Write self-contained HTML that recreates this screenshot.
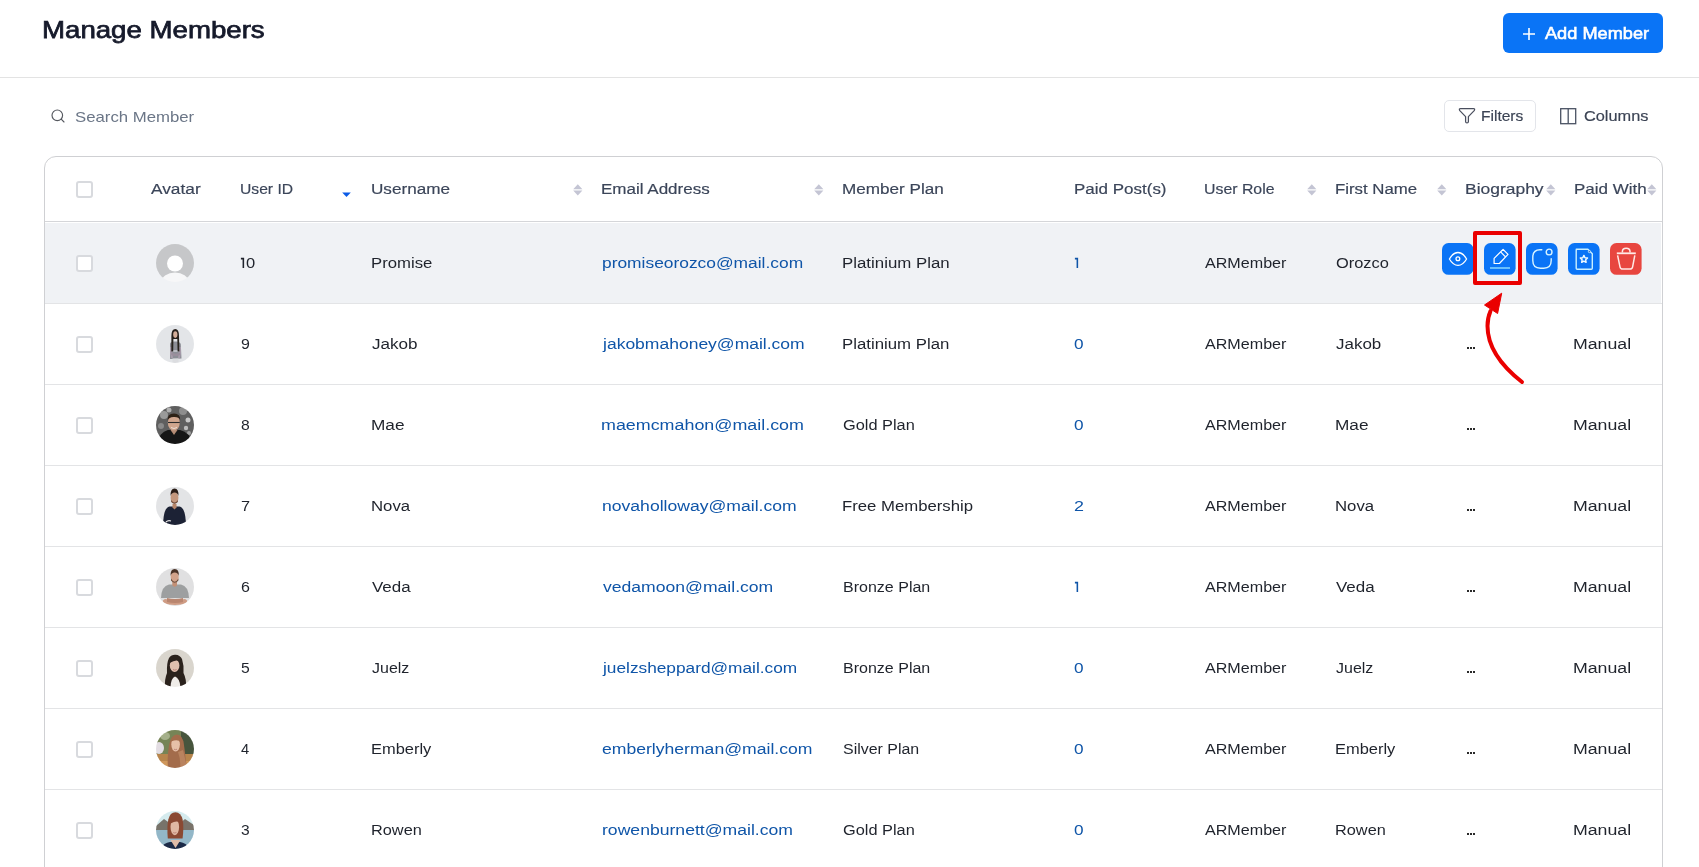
<!DOCTYPE html>
<html><head><meta charset="utf-8">
<style>
html,body{margin:0;padding:0;}
body{width:1699px;height:867px;overflow:hidden;position:relative;background:#fff;font-family:"Liberation Sans",sans-serif;}
.t{position:absolute;white-space:nowrap;line-height:1;transform-origin:0 0;}
.m{-webkit-text-stroke:0.18px currentColor;}
.av{position:absolute;width:38px;height:38px;border-radius:50%;background:#c4c4c4;overflow:hidden;}
</style></head><body>
<div class="t " style="left:41.66px;top:18.18px;font-size:24px;transform:scaleX(1.1511);color:#161a2b;-webkit-text-stroke:0.75px #161a2b;">Manage Members</div>
<div style="position:absolute;left:0;top:77px;width:1699px;height:1px;background:#e3e3e3"></div>
<div style="position:absolute;left:1503px;top:13px;width:160px;height:40px;border-radius:6px;background:#0a74f6"></div>
<svg style="position:absolute;left:1521px;top:27px" width="16" height="14" viewBox="0 0 16 14"><path d="M8 1V13M2 7H14" stroke="#fff" stroke-width="1.6" fill="none"/></svg>
<div class="t " style="left:1544.95px;top:25.01px;font-size:17px;transform:scaleX(1.0691);color:#ffffff;-webkit-text-stroke:0.6px #fff;">Add Member</div>
<svg style="position:absolute;left:50px;top:108px" width="16" height="16" viewBox="0 0 16 16"><circle cx="7.3" cy="7.3" r="5.3" stroke="#55585f" stroke-width="1.15" fill="none"/><path d="M11.2 11.2L14 14" stroke="#55585f" stroke-width="1.15" stroke-linecap="round"/></svg>
<div class="t " style="left:74.92px;top:109.30px;font-size:15px;transform:scaleX(1.1168);color:#6b7687;">Search Member</div>
<div style="position:absolute;left:1444px;top:100px;width:90px;height:30px;border:1px solid #e3e5ea;border-radius:5px;background:#fff"></div>
<svg style="position:absolute;left:1457px;top:106px" width="19" height="19" viewBox="0 0 19 19"><path d="M3.6 2.6H16.4Q18.4 2.6 17.2 4.6L11.4 10.6V15.4Q11.4 16.9 10 16.9Q8.6 16.9 8.6 15.4V10.6L2.8 4.6Q1.6 2.6 3.6 2.6Z" stroke="#4a4f5e" stroke-width="1.25" fill="none" stroke-linejoin="round"/></svg>
<div class="t m" style="left:1481.25px;top:108.48px;font-size:15.5px;transform:scaleX(1.0025);color:#3b4354;">Filters</div>
<svg style="position:absolute;left:1559px;top:107px" width="19" height="19" viewBox="0 0 19 19"><rect x="1.7" y="1.7" width="15" height="15" stroke="#4a5263" stroke-width="1.3" fill="none"/><path d="M9.2 1.7V16.7" stroke="#4a5263" stroke-width="1.3"/></svg>
<div class="t m" style="left:1583.86px;top:108.48px;font-size:15.5px;transform:scaleX(1.0535);color:#3b4354;">Columns</div>
<div style="position:absolute;left:44px;top:156px;width:1617px;height:760px;border:1px solid #cfd0d3;border-radius:12px;background:#fff"></div>
<div class="t m" style="left:150.64px;top:181.08px;font-size:15.5px;transform:scaleX(1.1154);color:#3b4559;">Avatar</div>
<div class="t m" style="left:239.99px;top:181.08px;font-size:15.5px;transform:scaleX(1.0099);color:#3b4559;">User ID</div>
<div class="t m" style="left:370.58px;top:181.08px;font-size:15.5px;transform:scaleX(1.1041);color:#3b4559;">Username</div>
<div class="t m" style="left:601.33px;top:181.08px;font-size:15.5px;transform:scaleX(1.0972);color:#3b4559;">Email Address</div>
<div class="t m" style="left:842.22px;top:181.08px;font-size:15.5px;transform:scaleX(1.1034);color:#3b4559;">Member Plan</div>
<div class="t m" style="left:1073.73px;top:181.08px;font-size:15.5px;transform:scaleX(1.0961);color:#3b4559;">Paid Post(s)</div>
<div class="t m" style="left:1204.17px;top:181.08px;font-size:15.5px;transform:scaleX(1.0231);color:#3b4559;">User Role</div>
<div class="t m" style="left:1334.85px;top:181.08px;font-size:15.5px;transform:scaleX(1.0833);color:#3b4559;">First Name</div>
<div class="t m" style="left:1465.39px;top:181.08px;font-size:15.5px;transform:scaleX(1.1255);color:#3b4559;">Biography</div>
<div class="t m" style="left:1573.93px;top:181.08px;font-size:15.5px;transform:scaleX(1.0976);color:#3b4559;">Paid With</div>
<div style="position:absolute;left:76px;top:181px;width:13px;height:13px;border:2px solid #d8dade;border-radius:3px;background:#fff"></div>
<svg style="position:absolute;left:572.6px;top:183.8px" width="10" height="12" viewBox="0 0 10 12"><path d="M0.2 5.2L4.8 0.3L9.4 5.2Z M0.2 6.5L4.8 11.5L9.4 6.5Z" fill="#c4c5d4"/></svg>
<svg style="position:absolute;left:813.6px;top:183.8px" width="10" height="12" viewBox="0 0 10 12"><path d="M0.2 5.2L4.8 0.3L9.4 5.2Z M0.2 6.5L4.8 11.5L9.4 6.5Z" fill="#c4c5d4"/></svg>
<svg style="position:absolute;left:1306.6px;top:183.8px" width="10" height="12" viewBox="0 0 10 12"><path d="M0.2 5.2L4.8 0.3L9.4 5.2Z M0.2 6.5L4.8 11.5L9.4 6.5Z" fill="#c4c5d4"/></svg>
<svg style="position:absolute;left:1436.6px;top:183.8px" width="10" height="12" viewBox="0 0 10 12"><path d="M0.2 5.2L4.8 0.3L9.4 5.2Z M0.2 6.5L4.8 11.5L9.4 6.5Z" fill="#c4c5d4"/></svg>
<svg style="position:absolute;left:1545.6px;top:183.8px" width="10" height="12" viewBox="0 0 10 12"><path d="M0.2 5.2L4.8 0.3L9.4 5.2Z M0.2 6.5L4.8 11.5L9.4 6.5Z" fill="#c4c5d4"/></svg>
<svg style="position:absolute;left:1646.6px;top:183.8px" width="10" height="12" viewBox="0 0 10 12"><path d="M0.2 5.2L4.8 0.3L9.4 5.2Z M0.2 6.5L4.8 11.5L9.4 6.5Z" fill="#c4c5d4"/></svg>
<svg style="position:absolute;left:342px;top:191.8px" width="9" height="6" viewBox="0 0 9 6"><path d="M0.2 0.4H8.8L4.5 5Z" fill="#0b5be6"/></svg>
<div style="position:absolute;left:45px;top:221px;width:1617px;height:1px;background:#d5d6d9"></div>
<div style="position:absolute;left:45px;top:223px;width:1616px;height:80px;background:#f0f2f5"></div>
<div style="position:absolute;left:45px;top:303px;width:1617px;height:1px;background:#e3e4e6"></div>
<div style="position:absolute;left:76px;top:255px;width:13px;height:13px;border:2px solid #d8dade;border-radius:3px;background:#fff"></div>
<svg style="position:absolute;left:156px;top:244px" width="38" height="38" viewBox="0 0 38 38"><defs><clipPath id="c0"><circle cx="19" cy="19" r="19"/></clipPath><filter id="bl0" x="-10%" y="-10%" width="120%" height="120%"><feGaussianBlur stdDeviation="0.35"/></filter></defs><g clip-path="url(#c0)"><g filter="url(#bl0)"><rect width="38" height="38" fill="#c6c7c9"/><circle cx="19" cy="19.5" r="8" fill="#fff"/><ellipse cx="19" cy="38" rx="13.5" ry="9.5" fill="#f7f7f8"/></g></g></svg>
<svg style="position:absolute;left:240px;top:257px" width="6" height="12" viewBox="0 0 6 12"><path d="M0.9 1.6H3.35V11" stroke="#1f232c" stroke-width="1.55" fill="none"/></svg>
<div class="t " style="left:245.66px;top:254.88px;font-size:15.5px;transform:scaleX(1.0676);color:#1f232c;">0</div>
<div class="t " style="left:370.55px;top:254.88px;font-size:15.5px;transform:scaleX(1.0792);color:#1f232c;">Promise</div>
<div class="t " style="left:601.58px;top:254.88px;font-size:15.5px;transform:scaleX(1.1212);color:#0f55a8;">promiseorozco@mail.com</div>
<div class="t " style="left:842.44px;top:254.88px;font-size:15.5px;transform:scaleX(1.0868);color:#1f232c;">Platinium Plan</div>
<svg style="position:absolute;left:1074px;top:257px" width="6" height="12" viewBox="0 0 6 12"><path d="M0.9 1.6H3.35V11" stroke="#0f55a8" stroke-width="1.55" fill="none"/></svg>
<div class="t " style="left:1205.35px;top:254.88px;font-size:15.5px;transform:scaleX(1.0391);color:#1f232c;">ARMember</div>
<div class="t " style="left:1335.51px;top:254.88px;font-size:15.5px;transform:scaleX(1.0587);color:#1f232c;">Orozco</div>
<div style="position:absolute;left:45px;top:384px;width:1617px;height:1px;background:#e3e4e6"></div>
<div style="position:absolute;left:76px;top:336px;width:13px;height:13px;border:2px solid #d8dade;border-radius:3px;background:#fff"></div>
<svg style="position:absolute;left:156px;top:325px" width="38" height="38" viewBox="0 0 38 38"><defs><clipPath id="c1"><circle cx="19" cy="19" r="19"/></clipPath><filter id="bl1" x="-10%" y="-10%" width="120%" height="120%"><feGaussianBlur stdDeviation="0.35"/></filter></defs><g clip-path="url(#c1)"><g filter="url(#bl1)"><rect width="38" height="38" fill="#e3e5e8"/><path d="M14 34V19Q14 17.5 15.5 17.2L17.5 16.5H21L23 17.2Q24.6 17.5 24.8 19.2L25.5 33.5Z" fill="#8c8e96"/><path d="M14 22Q13.6 28 15 33H17Q16 28 16.5 22Z" fill="#a89cab"/><path d="M25 22Q25.4 28 24 33H22Q23 28 22.5 22Z" fill="#a89cab"/><path d="M16 25H23V27H16Z" fill="#b9bbc2"/><path d="M15.2 27Q19 30 24 27.5V30Q19 32 15.2 30Z" fill="#9a8e9c"/><path d="M15.4 11Q15.4 4 19.3 4Q23 4 23 11L23.4 26.5H21.6L21.3 14H17.4L17.2 26.5H15.3Z" fill="#27201d"/><ellipse cx="19.3" cy="9.6" rx="2.1" ry="3.3" fill="#d4ae9a"/><rect x="16.5" y="33.5" width="6" height="4.5" fill="#dcdde0"/></g></g></svg>
<div class="t " style="left:241.08px;top:335.88px;font-size:15.5px;transform:scaleX(1.0278);color:#1f232c;">9</div>
<div class="t " style="left:371.62px;top:335.88px;font-size:15.5px;transform:scaleX(1.1026);color:#1f232c;">Jakob</div>
<div class="t " style="left:603.15px;top:335.88px;font-size:15.5px;transform:scaleX(1.1295);color:#0f55a8;">jakobmahoney@mail.com</div>
<div class="t " style="left:842.45px;top:335.88px;font-size:15.5px;transform:scaleX(1.0837);color:#1f232c;">Platinium Plan</div>
<div class="t " style="left:1074.44px;top:335.88px;font-size:15.5px;transform:scaleX(1.1081);color:#0f55a8;">0</div>
<div class="t " style="left:1205.35px;top:335.88px;font-size:15.5px;transform:scaleX(1.0391);color:#1f232c;">ARMember</div>
<div class="t " style="left:1336.03px;top:335.88px;font-size:15.5px;transform:scaleX(1.0952);color:#1f232c;">Jakob</div>
<div style="position:absolute;left:1467px;top:347px;width:2px;height:2px;background:#2a2a2a"></div>
<div style="position:absolute;left:1470px;top:347px;width:2px;height:2px;background:#2a2a2a"></div>
<div style="position:absolute;left:1473px;top:347px;width:2px;height:2px;background:#2a2a2a"></div>
<div class="t " style="left:1573.37px;top:335.88px;font-size:15.5px;transform:scaleX(1.1432);color:#1f232c;">Manual</div>
<div style="position:absolute;left:45px;top:465px;width:1617px;height:1px;background:#e3e4e6"></div>
<div style="position:absolute;left:76px;top:417px;width:13px;height:13px;border:2px solid #d8dade;border-radius:3px;background:#fff"></div>
<svg style="position:absolute;left:156px;top:406px" width="38" height="38" viewBox="0 0 38 38"><defs><clipPath id="c2"><circle cx="19" cy="19" r="19"/></clipPath><filter id="bl2" x="-10%" y="-10%" width="120%" height="120%"><feGaussianBlur stdDeviation="0.35"/></filter></defs><g clip-path="url(#c2)"><g filter="url(#bl2)"><rect width="38" height="38" fill="#5e5e5e"/><circle cx="8" cy="9" r="4" fill="#9a9a9a"/><circle cx="27" cy="5" r="4" fill="#8d8d8d"/><circle cx="32" cy="14" r="2.5" fill="#c8c8c8"/><circle cx="30" cy="22" r="2.2" fill="#bdbdbd"/><circle cx="5" cy="20" r="3" fill="#8a8a8a"/><circle cx="13" cy="4" r="2.5" fill="#b0b0b0"/><circle cx="33" cy="27" r="2" fill="#a0a0a0"/><path d="M2 38Q3 26 12 24H24Q34 26 36 38Z" fill="#141414"/><path d="M14.5 24L18 29L21.5 24Z" fill="#b48b74"/><ellipse cx="17.8" cy="16.5" rx="6" ry="8" fill="#d0a68e"/><path d="M11.6 14.5Q11 7.5 18 7.5Q24.5 7.8 24.2 14Q23 10.8 18 11Q13 10.8 11.6 14.5Z" fill="#2e2019"/><path d="M12 16.5H23.8" stroke="#2b2b2b" stroke-width="1.1"/><path d="M15 21.5Q18 23.5 21 21.5" stroke="#f0e6e0" stroke-width="0.9" fill="none"/></g></g></svg>
<div class="t " style="left:241.14px;top:416.88px;font-size:15.5px;transform:scaleX(1.0137);color:#1f232c;">8</div>
<div class="t " style="left:370.51px;top:416.88px;font-size:15.5px;transform:scaleX(1.1115);color:#1f232c;">Mae</div>
<div class="t " style="left:601.49px;top:416.88px;font-size:15.5px;transform:scaleX(1.1535);color:#0f55a8;">maemcmahon@mail.com</div>
<div class="t " style="left:843.01px;top:416.88px;font-size:15.5px;transform:scaleX(1.0543);color:#1f232c;">Gold Plan</div>
<div class="t " style="left:1074.44px;top:416.88px;font-size:15.5px;transform:scaleX(1.1081);color:#0f55a8;">0</div>
<div class="t " style="left:1205.35px;top:416.88px;font-size:15.5px;transform:scaleX(1.0391);color:#1f232c;">ARMember</div>
<div class="t " style="left:1334.91px;top:416.88px;font-size:15.5px;transform:scaleX(1.1115);color:#1f232c;">Mae</div>
<div style="position:absolute;left:1467px;top:428px;width:2px;height:2px;background:#2a2a2a"></div>
<div style="position:absolute;left:1470px;top:428px;width:2px;height:2px;background:#2a2a2a"></div>
<div style="position:absolute;left:1473px;top:428px;width:2px;height:2px;background:#2a2a2a"></div>
<div class="t " style="left:1573.37px;top:416.88px;font-size:15.5px;transform:scaleX(1.1432);color:#1f232c;">Manual</div>
<div style="position:absolute;left:45px;top:546px;width:1617px;height:1px;background:#e3e4e6"></div>
<div style="position:absolute;left:76px;top:498px;width:13px;height:13px;border:2px solid #d8dade;border-radius:3px;background:#fff"></div>
<svg style="position:absolute;left:156px;top:487px" width="38" height="38" viewBox="0 0 38 38"><defs><clipPath id="c3"><circle cx="19" cy="19" r="19"/></clipPath><filter id="bl3" x="-10%" y="-10%" width="120%" height="120%"><feGaussianBlur stdDeviation="0.35"/></filter></defs><g clip-path="url(#c3)"><g filter="url(#bl3)"><rect width="38" height="38" fill="#e3e4e6"/><path d="M7 38Q7.5 20.5 13.5 19.5H23.5Q29.5 20.5 30 38Z" fill="#1e2234"/><path d="M16.5 17V20.5L18.5 22.5L20.5 20.5V17Z" fill="#b58469"/><ellipse cx="18.5" cy="10.8" rx="3.9" ry="6" fill="#c4977d"/><path d="M14.6 9Q14.2 1.8 18.6 1.6Q22.9 1.8 22.4 9Q21.6 5.5 18.6 5.5Q15.5 5.5 14.6 9Z" fill="#2a1e18"/><path d="M15.2 13Q18.5 18 21.8 13V15Q18.5 18.5 15.2 15Z" fill="#6e4a38"/><path d="M10 35Q12 33 15 34" stroke="#e8e8e8" stroke-width="1.2" fill="none"/></g></g></svg>
<div class="t " style="left:240.96px;top:497.88px;font-size:15.5px;transform:scaleX(1.0496);color:#1f232c;">7</div>
<div class="t " style="left:370.55px;top:497.88px;font-size:15.5px;transform:scaleX(1.0815);color:#1f232c;">Nova</div>
<div class="t " style="left:601.51px;top:497.88px;font-size:15.5px;transform:scaleX(1.1338);color:#0f55a8;">novaholloway@mail.com</div>
<div class="t " style="left:842.45px;top:497.88px;font-size:15.5px;transform:scaleX(1.0790);color:#1f232c;">Free Membership</div>
<div class="t " style="left:1074.23px;top:497.88px;font-size:15.5px;transform:scaleX(1.1549);color:#0f55a8;">2</div>
<div class="t " style="left:1205.35px;top:497.88px;font-size:15.5px;transform:scaleX(1.0391);color:#1f232c;">ARMember</div>
<div class="t " style="left:1334.95px;top:497.88px;font-size:15.5px;transform:scaleX(1.0815);color:#1f232c;">Nova</div>
<div style="position:absolute;left:1467px;top:509px;width:2px;height:2px;background:#2a2a2a"></div>
<div style="position:absolute;left:1470px;top:509px;width:2px;height:2px;background:#2a2a2a"></div>
<div style="position:absolute;left:1473px;top:509px;width:2px;height:2px;background:#2a2a2a"></div>
<div class="t " style="left:1573.37px;top:497.88px;font-size:15.5px;transform:scaleX(1.1432);color:#1f232c;">Manual</div>
<div style="position:absolute;left:45px;top:627px;width:1617px;height:1px;background:#e3e4e6"></div>
<div style="position:absolute;left:76px;top:579px;width:13px;height:13px;border:2px solid #d8dade;border-radius:3px;background:#fff"></div>
<svg style="position:absolute;left:156px;top:568px" width="38" height="38" viewBox="0 0 38 38"><defs><clipPath id="c4"><circle cx="19" cy="19" r="19"/></clipPath><filter id="bl4" x="-10%" y="-10%" width="120%" height="120%"><feGaussianBlur stdDeviation="0.35"/></filter></defs><g clip-path="url(#c4)"><g filter="url(#bl4)"><rect width="38" height="38" fill="#e0e0e1"/><path d="M5 30Q5.5 18 13 16.5H25Q32.5 18 33 30Z" fill="#9d9fa0"/><path d="M9 31Q6 32 7 35Q19 39 31 35Q32 32 29 31Q19 33 9 31Z" fill="#cf9c84"/><path d="M11 30Q19 32 27 30V34Q19 36 11 34Z" fill="#b98670"/><path d="M16.3 14V17.5L18.7 19L21 17.5V14Z" fill="#c39076"/><ellipse cx="18.7" cy="9" rx="4" ry="5.6" fill="#d2a38b"/><path d="M14.6 8Q14.2 1 18.7 1Q23.2 1 22.8 8Q22 4.5 18.7 4.5Q15.4 4.5 14.6 8Z" fill="#4a3226"/><path d="M15 10.5Q18.7 17 22.4 10.5V12.5Q18.7 17 15 12.5Z" fill="#6e5040"/></g></g></svg>
<div class="t " style="left:240.97px;top:578.88px;font-size:15.5px;transform:scaleX(1.0350);color:#1f232c;">6</div>
<div class="t " style="left:371.85px;top:578.88px;font-size:15.5px;transform:scaleX(1.0935);color:#1f232c;">Veda</div>
<div class="t " style="left:602.64px;top:578.88px;font-size:15.5px;transform:scaleX(1.1338);color:#0f55a8;">vedamoon@mail.com</div>
<div class="t " style="left:842.51px;top:578.88px;font-size:15.5px;transform:scaleX(1.0335);color:#1f232c;">Bronze Plan</div>
<svg style="position:absolute;left:1074px;top:581px" width="6" height="12" viewBox="0 0 6 12"><path d="M0.9 1.6H3.35V11" stroke="#0f55a8" stroke-width="1.55" fill="none"/></svg>
<div class="t " style="left:1205.35px;top:578.88px;font-size:15.5px;transform:scaleX(1.0391);color:#1f232c;">ARMember</div>
<div class="t " style="left:1336.25px;top:578.88px;font-size:15.5px;transform:scaleX(1.0935);color:#1f232c;">Veda</div>
<div style="position:absolute;left:1467px;top:590px;width:2px;height:2px;background:#2a2a2a"></div>
<div style="position:absolute;left:1470px;top:590px;width:2px;height:2px;background:#2a2a2a"></div>
<div style="position:absolute;left:1473px;top:590px;width:2px;height:2px;background:#2a2a2a"></div>
<div class="t " style="left:1573.37px;top:578.88px;font-size:15.5px;transform:scaleX(1.1432);color:#1f232c;">Manual</div>
<div style="position:absolute;left:45px;top:708px;width:1617px;height:1px;background:#e3e4e6"></div>
<div style="position:absolute;left:76px;top:660px;width:13px;height:13px;border:2px solid #d8dade;border-radius:3px;background:#fff"></div>
<svg style="position:absolute;left:156px;top:649px" width="38" height="38" viewBox="0 0 38 38"><defs><clipPath id="c5"><circle cx="19" cy="19" r="19"/></clipPath><filter id="bl5" x="-10%" y="-10%" width="120%" height="120%"><feGaussianBlur stdDeviation="0.35"/></filter></defs><g clip-path="url(#c5)"><g filter="url(#bl5)"><rect width="38" height="38" fill="#d9d5cd"/><path d="M9 38Q8.5 30 11 24Q10.5 14 13 9Q15.5 5.5 19.5 5.8Q24 6 26 10Q28 16 27.5 24Q30.5 30 30 38Z" fill="#2c221e"/><path d="M14.5 38Q15 29 19 27.5Q23.5 29 24.5 38Z" fill="#efece8"/><ellipse cx="18.6" cy="16.5" rx="4.8" ry="6.4" fill="#e0c0ae"/><path d="M13.5 14Q14.5 8 19.5 8Q23.5 8.5 24 13Q21 9.5 13.5 14Z" fill="#2c221e"/><path d="M17 20.5Q18.8 21.8 20.6 20.5" stroke="#b97e76" stroke-width="0.9" fill="none"/></g></g></svg>
<div class="t " style="left:241.14px;top:659.88px;font-size:15.5px;transform:scaleX(1.0137);color:#1f232c;">5</div>
<div class="t " style="left:371.64px;top:659.88px;font-size:15.5px;transform:scaleX(1.0313);color:#1f232c;">Juelz</div>
<div class="t " style="left:603.15px;top:659.88px;font-size:15.5px;transform:scaleX(1.1143);color:#0f55a8;">juelzsheppard@mail.com</div>
<div class="t " style="left:842.51px;top:659.88px;font-size:15.5px;transform:scaleX(1.0335);color:#1f232c;">Bronze Plan</div>
<div class="t " style="left:1074.44px;top:659.88px;font-size:15.5px;transform:scaleX(1.1081);color:#0f55a8;">0</div>
<div class="t " style="left:1205.35px;top:659.88px;font-size:15.5px;transform:scaleX(1.0391);color:#1f232c;">ARMember</div>
<div class="t " style="left:1336.04px;top:659.88px;font-size:15.5px;transform:scaleX(1.0312);color:#1f232c;">Juelz</div>
<div style="position:absolute;left:1467px;top:671px;width:2px;height:2px;background:#2a2a2a"></div>
<div style="position:absolute;left:1470px;top:671px;width:2px;height:2px;background:#2a2a2a"></div>
<div style="position:absolute;left:1473px;top:671px;width:2px;height:2px;background:#2a2a2a"></div>
<div class="t " style="left:1573.37px;top:659.88px;font-size:15.5px;transform:scaleX(1.1432);color:#1f232c;">Manual</div>
<div style="position:absolute;left:45px;top:789px;width:1617px;height:1px;background:#e3e4e6"></div>
<div style="position:absolute;left:76px;top:741px;width:13px;height:13px;border:2px solid #d8dade;border-radius:3px;background:#fff"></div>
<svg style="position:absolute;left:156px;top:730px" width="38" height="38" viewBox="0 0 38 38"><defs><clipPath id="c6"><circle cx="19" cy="19" r="19"/></clipPath><filter id="bl6" x="-10%" y="-10%" width="120%" height="120%"><feGaussianBlur stdDeviation="0.35"/></filter></defs><g clip-path="url(#c6)"><g filter="url(#bl6)"><rect width="38" height="38" fill="#768456"/><rect x="25" width="13" height="32" fill="#46543c"/><ellipse cx="3" cy="18" rx="5" ry="6" fill="#e3dde3"/><ellipse cx="9" cy="6" rx="5" ry="4" fill="#a5b08a"/><rect y="24" width="38" height="14" fill="#b7854e"/><path d="M0 31H38V38H0Z" fill="#cf975c"/><path d="M12 38Q11 27 13 15Q15 4.5 21 4.5Q27 5 28 15Q29.5 27 31 38Z" fill="#a36c4c"/><path d="M22 22Q25 30 24 38H31Q29 28 27 20Z" fill="#b9835e"/><ellipse cx="19.6" cy="14.5" rx="4.3" ry="7" fill="#e6c0a8"/><path d="M15.2 11.5Q16 6.5 20.8 6.5Q25 7 24.8 12.5Q22 8.5 15.2 11.5Z" fill="#a36c4c"/><path d="M18 19.2Q19.5 20.2 21 19.2" stroke="#b77a70" stroke-width="0.8" fill="none"/></g></g></svg>
<div class="t " style="left:241.47px;top:740.88px;font-size:15.5px;transform:scaleX(0.9487);color:#1f232c;">4</div>
<div class="t " style="left:370.57px;top:740.88px;font-size:15.5px;transform:scaleX(1.0603);color:#1f232c;">Emberly</div>
<div class="t " style="left:601.96px;top:740.88px;font-size:15.5px;transform:scaleX(1.1347);color:#0f55a8;">emberlyherman@mail.com</div>
<div class="t " style="left:843.08px;top:740.88px;font-size:15.5px;transform:scaleX(1.0283);color:#1f232c;">Silver Plan</div>
<div class="t " style="left:1074.44px;top:740.88px;font-size:15.5px;transform:scaleX(1.1081);color:#0f55a8;">0</div>
<div class="t " style="left:1205.35px;top:740.88px;font-size:15.5px;transform:scaleX(1.0391);color:#1f232c;">ARMember</div>
<div class="t " style="left:1334.97px;top:740.88px;font-size:15.5px;transform:scaleX(1.0603);color:#1f232c;">Emberly</div>
<div style="position:absolute;left:1467px;top:752px;width:2px;height:2px;background:#2a2a2a"></div>
<div style="position:absolute;left:1470px;top:752px;width:2px;height:2px;background:#2a2a2a"></div>
<div style="position:absolute;left:1473px;top:752px;width:2px;height:2px;background:#2a2a2a"></div>
<div class="t " style="left:1573.37px;top:740.88px;font-size:15.5px;transform:scaleX(1.1432);color:#1f232c;">Manual</div>
<div style="position:absolute;left:45px;top:870px;width:1617px;height:1px;background:#e3e4e6"></div>
<div style="position:absolute;left:76px;top:822px;width:13px;height:13px;border:2px solid #d8dade;border-radius:3px;background:#fff"></div>
<svg style="position:absolute;left:156px;top:811px" width="38" height="38" viewBox="0 0 38 38"><defs><clipPath id="c7"><circle cx="19" cy="19" r="19"/></clipPath><filter id="bl7" x="-10%" y="-10%" width="120%" height="120%"><feGaussianBlur stdDeviation="0.35"/></filter></defs><g clip-path="url(#c7)"><g filter="url(#bl7)"><rect width="38" height="38" fill="#d5ebee"/><path d="M0 15L8 8L15 13V20H0Z" fill="#77736b"/><path d="M38 14L29 8L23 13V20H38Z" fill="#7a736a"/><rect y="19" width="38" height="19" fill="#93b7c8"/><path d="M4 38Q8 31.5 14 31H24Q30 31.5 34 38Z" fill="#1d2946"/><path d="M14.5 29L19.5 37L24.5 29Z" fill="#e0bca8"/><path d="M11.8 27.5Q10.8 16 12.3 8.5Q14 1.2 19.5 1.2Q25 1.6 26.6 8.5Q28 16 26.6 27.5Z" fill="#8a4a33"/><ellipse cx="18.8" cy="16" rx="4.3" ry="8.3" fill="#e0b9a3"/><path d="M14.5 12.5Q15.5 5 20.5 4.8Q24.8 5.2 25 13.5Q22.5 8 14.5 12.5Z" fill="#8a4a33"/><path d="M17.2 21.5Q18.8 22.5 20.4 21.5" stroke="#b57a6e" stroke-width="0.8" fill="none"/></g></g></svg>
<div class="t " style="left:241.20px;top:821.88px;font-size:15.5px;transform:scaleX(1.0068);color:#1f232c;">3</div>
<div class="t " style="left:370.58px;top:821.88px;font-size:15.5px;transform:scaleX(1.0522);color:#1f232c;">Rowen</div>
<div class="t " style="left:601.51px;top:821.88px;font-size:15.5px;transform:scaleX(1.1351);color:#0f55a8;">rowenburnett@mail.com</div>
<div class="t " style="left:843.01px;top:821.88px;font-size:15.5px;transform:scaleX(1.0543);color:#1f232c;">Gold Plan</div>
<div class="t " style="left:1074.44px;top:821.88px;font-size:15.5px;transform:scaleX(1.1081);color:#0f55a8;">0</div>
<div class="t " style="left:1205.35px;top:821.88px;font-size:15.5px;transform:scaleX(1.0391);color:#1f232c;">ARMember</div>
<div class="t " style="left:1334.98px;top:821.88px;font-size:15.5px;transform:scaleX(1.0522);color:#1f232c;">Rowen</div>
<div style="position:absolute;left:1467px;top:833px;width:2px;height:2px;background:#2a2a2a"></div>
<div style="position:absolute;left:1470px;top:833px;width:2px;height:2px;background:#2a2a2a"></div>
<div style="position:absolute;left:1473px;top:833px;width:2px;height:2px;background:#2a2a2a"></div>
<div class="t " style="left:1573.37px;top:821.88px;font-size:15.5px;transform:scaleX(1.1432);color:#1f232c;">Manual</div>
<svg style="position:absolute;left:1442px;top:243px" width="32" height="32" viewBox="0 0 32 32"><rect x="0" y="0" width="31.6" height="31.8" rx="6.5" fill="#0a74f6"/><path d="M7.4 16C9.9 11.7 12.7 9.5 16 9.5S22.1 11.7 24.6 16C22.1 20.3 19.3 22.4 16 22.4S9.9 20.3 7.4 16Z" stroke="#fff" stroke-width="1.3" fill="none" stroke-linejoin="round"/><circle cx="15.9" cy="15.8" r="1.9" stroke="#fff" stroke-width="1.3" fill="none"/></svg>
<svg style="position:absolute;left:1484px;top:243px" width="32" height="32" viewBox="0 0 32 32"><rect x="0" y="0" width="31.6" height="31.8" rx="6.5" fill="#0a74f6"/><path d="M10.1 15.4L19.1 6.4L24 11.4L15.4 20.5H10.1Z" stroke="#fff" stroke-width="1.2" fill="none" stroke-linejoin="round"/><path d="M16.6 8.9L21.5 13.9" stroke="#fff" stroke-width="1.2"/><path d="M6 25H26" stroke="#80d2ff" stroke-width="1.6"/></svg>
<svg style="position:absolute;left:1526px;top:243px" width="32" height="32" viewBox="0 0 32 32"><rect x="0" y="0" width="31.6" height="31.8" rx="6.5" fill="#0a74f6"/><path d="M15.8 6.8H14C9.4 6.8 6.8 9.6 6.8 14.4V17.6C6.8 22.4 9.4 25.2 14.4 25.2H17.8C22.6 25.2 25.2 22.4 25.2 17.6V15.8" stroke="#d8f4ff" stroke-width="1.4" fill="none" stroke-linecap="round"/><circle cx="23.1" cy="9" r="2.9" stroke="#d8f4ff" stroke-width="1.4" fill="none"/></svg>
<svg style="position:absolute;left:1568px;top:243px" width="32" height="32" viewBox="0 0 32 32"><rect x="0" y="0" width="31.6" height="31.8" rx="6.5" fill="#0a74f6"/><path d="M8.2 6.3H19.9L24.3 10.7V25.2Q24.3 26.2 23.3 26.2H9.2Q8.2 26.2 8.2 25.2V7.3Q8.2 6.3 9.2 6.3Z" stroke="#c8efff" stroke-width="1.4" fill="none" stroke-linejoin="round"/><circle cx="21.4" cy="8.6" r="1.1" fill="#3f6fc0" stroke="#c8efff" stroke-width="0.8"/><path d="M15.9 12.4L17 14.7L19.5 15L17.7 16.8L18.1 19.3L15.9 18.1L13.7 19.3L14.1 16.8L12.3 15L14.8 14.7Z" stroke="#f0fbff" stroke-width="1.45" fill="none" stroke-linejoin="round"/></svg>
<svg style="position:absolute;left:1610px;top:243px" width="32" height="32" viewBox="0 0 32 32"><rect x="0" y="0" width="31.6" height="31.8" rx="6.5" fill="#e8463f"/><path d="M6.8 10.3H25.8" stroke="#ffe9e6" stroke-width="1.8"/><path d="M12.4 9.4V8.6C12.4 6.6 13.9 5.3 16.2 5.3S20 6.6 20 8.6V9.4" stroke="#ffe9e6" stroke-width="1.5" fill="none"/><path d="M7.6 12.3L10 23.8Q10.4 26 12.6 26H20Q22.2 26 22.6 23.8L24.8 12.3" stroke="#ffe9e6" stroke-width="1.5" fill="none" stroke-linejoin="round"/></svg>
<div style="position:absolute;left:1473px;top:231px;width:41px;height:46px;border:4px solid #ea0000;border-radius:2px"></div>
<svg style="position:absolute;left:1470px;top:285px" width="70" height="105" viewBox="0 0 70 105"><path d="M52 97C33.5 82.5 17.5 63 17.5 41C17.5 35 18.5 30.5 20.5 26" stroke="#ea0000" stroke-width="4" fill="none" stroke-linecap="round"/><path d="M31.7 8.2L14.5 20L27.6 28.5Z" fill="#ea0000" stroke="#ea0000" stroke-width="1" stroke-linejoin="round"/></svg>
</body></html>
